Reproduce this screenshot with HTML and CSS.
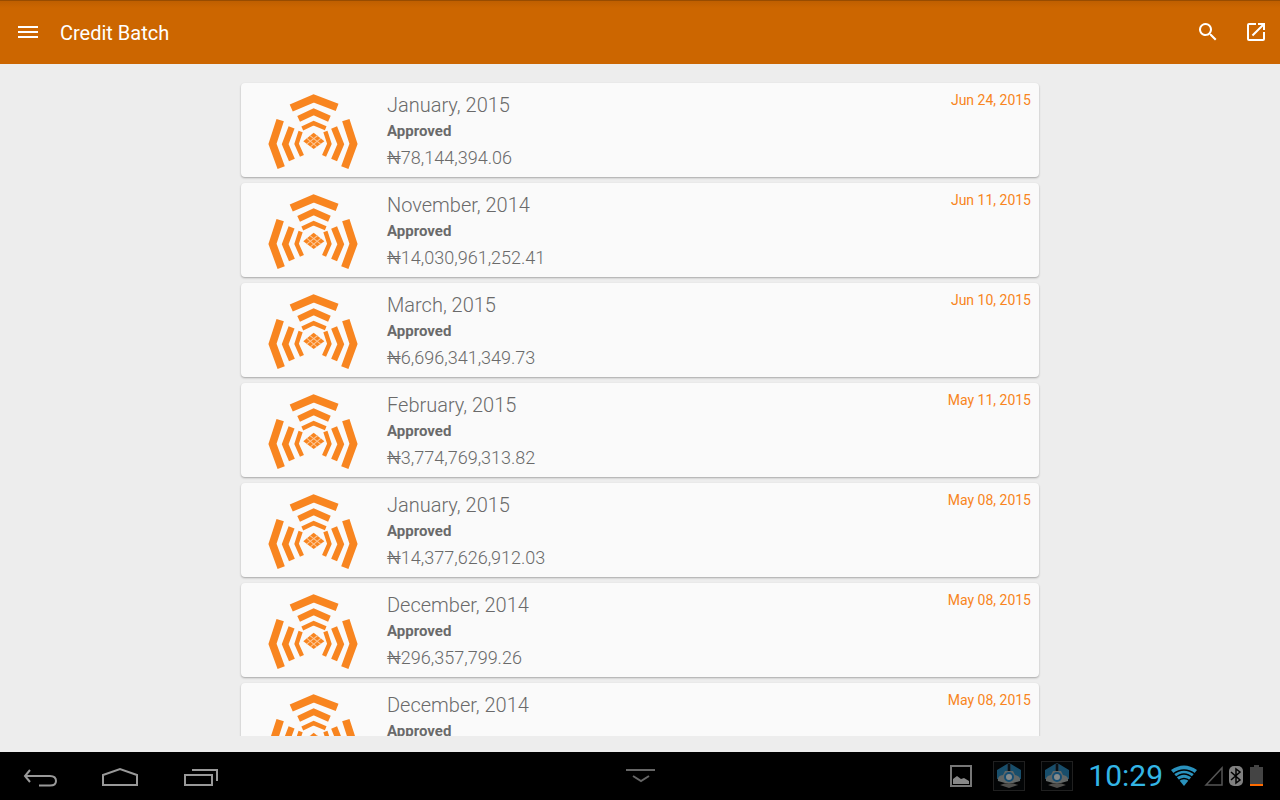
FILE: index.html
```html
<!DOCTYPE html>
<html lang="en">
<head>
    <meta charset="UTF-8">
    <meta name="viewport" content="width=device-width, initial-scale=1.0">
    <title>Credit Batch</title>
    <link rel="stylesheet" href="styles.css">
</head>
<body>
    <svg class="sprite" aria-hidden="true">
        <symbol id="logo" viewBox="24 26 268 224">
            <g fill="none" stroke="#f88520">
                <g stroke-width="23">
                    <path d="M93 68L160 39L230 66"/>
                    <path d="M60 104L37 175L63 246"/>
                    <path d="M256 104L279 175L253 246"/>
                </g>
                <g stroke-width="19">
                    <path d="M115 100L160 79L207 100"/>
                    <path d="M94 126L75 176L95 223"/>
                    <path d="M221 126L241 176L221 223"/>
                </g>
                <g stroke-width="13">
                    <path d="M126 129L160 113L196 128"/>
                    <path d="M121 138L109 175L125 211"/>
                    <path d="M195 138L207 175L191 211"/>
                </g>
            </g>
            <path fill="#f88520" d="M160 142L192 167L160 190L129 167Z"/>
            <path fill="none" stroke="#fcc899" stroke-width="3" d="M149 150L181 176M139 158L170 184M172 150L139 176M182 158L150 184"/>
        </symbol>
        <symbol id="robot" viewBox="0 0 32 30">
            <rect x="0.5" y="0.5" width="31" height="29" fill="#030506" stroke="#202020"/>
            <path fill="#184e6b" d="M4 9L14 3V12L8 18H4ZM28 9L18 3V12L24 18H28Z"/>
            <path fill="#20394a" d="M14 3L16 2L18 3V10H14Z"/>
            <path fill="#626766" d="M5 20Q4 15 10 14L12 10H20L22 14Q28 15 27 20L20 22H12Z"/>
            <circle cx="16" cy="16" r="4" fill="#858b8c" stroke="#154e73" stroke-width="2"/>
            <path fill="#50504d" d="M7 24Q16 20 25 24L16 27Z"/>
            <path stroke="#050505" stroke-width="1.5" d="M16 3V10"/>
        </symbol>
    </svg>

    <header class="app-bar">
        <button class="icon-button" aria-label="Menu">
            <svg width="24" height="24" viewBox="0 0 24 24"><path fill="#fff" d="M2 6h20v2H2zM2 11h20v2H2zM2 16h20v2H2z"/></svg>
        </button>
        <h1>Credit Batch</h1>
        <button class="icon-button" aria-label="Search">
            <svg width="24" height="24" viewBox="0 0 24 24"><path fill="#fff" d="M15.5 14h-.79l-.28-.27A6.5 6.5 0 1 0 13.73 14.43l.27.28v.79l5 4.99L20.49 19zM9.5 14a4.5 4.5 0 1 1 0-9 4.5 4.5 0 0 1 0 9z"/></svg>
        </button>
        <button class="icon-button" aria-label="Open in new window">
            <svg width="24" height="24" viewBox="0 0 24 24"><path fill="#fff" d="M19 19H5V5h7V3H5a2 2 0 0 0-2 2v14a2 2 0 0 0 2 2h14a2 2 0 0 0 2-2v-7h-2zM14 3v2h3.59l-9.83 9.83 1.41 1.41L19 6.41V10h2V3z"/></svg>
        </button>
    </header>

    <main class="content">
        <ul class="batch-list">
            <li class="card">
                <svg class="logo"><use href="#logo"/></svg>
                <div class="details">
                    <h2>January, 2015</h2>
                    <p class="status">Approved</p>
                    <p class="amount">₦78,144,394.06</p>
                </div>
                <time class="date">Jun 24, 2015</time>
            </li>
            <li class="card">
                <svg class="logo"><use href="#logo"/></svg>
                <div class="details">
                    <h2>November, 2014</h2>
                    <p class="status">Approved</p>
                    <p class="amount">₦14,030,961,252.41</p>
                </div>
                <time class="date">Jun 11, 2015</time>
            </li>
            <li class="card">
                <svg class="logo"><use href="#logo"/></svg>
                <div class="details">
                    <h2>March, 2015</h2>
                    <p class="status">Approved</p>
                    <p class="amount">₦6,696,341,349.73</p>
                </div>
                <time class="date">Jun 10, 2015</time>
            </li>
            <li class="card">
                <svg class="logo"><use href="#logo"/></svg>
                <div class="details">
                    <h2>February, 2015</h2>
                    <p class="status">Approved</p>
                    <p class="amount">₦3,774,769,313.82</p>
                </div>
                <time class="date">May 11, 2015</time>
            </li>
            <li class="card">
                <svg class="logo"><use href="#logo"/></svg>
                <div class="details">
                    <h2>January, 2015</h2>
                    <p class="status">Approved</p>
                    <p class="amount">₦14,377,626,912.03</p>
                </div>
                <time class="date">May 08, 2015</time>
            </li>
            <li class="card">
                <svg class="logo"><use href="#logo"/></svg>
                <div class="details">
                    <h2>December, 2014</h2>
                    <p class="status">Approved</p>
                    <p class="amount">₦296,357,799.26</p>
                </div>
                <time class="date">May 08, 2015</time>
            </li>
            <li class="card">
                <svg class="logo"><use href="#logo"/></svg>
                <div class="details">
                    <h2>December, 2014</h2>
                    <p class="status">Approved</p>
                </div>
                <time class="date">May 08, 2015</time>
            </li>
        </ul>
    </main>

    <footer class="system-bar">
        <div class="nav-keys">
            <button class="nav-button" aria-label="Back">
                <svg width="40" height="32" viewBox="0 0 40 32"><path fill="none" stroke="#999" stroke-width="2" d="M10 11L5 17L10 23M5 17H30Q36 17 36 22Q36 26.5 30 26.5H19" transform="translate(0 -1)"/></svg>
            </button>
            <button class="nav-button" aria-label="Home">
                <svg width="40" height="32" viewBox="0 0 40 32"><path fill="none" stroke="#999" stroke-width="2" d="M3 25V15L20 9L37 15V25Z"/></svg>
            </button>
            <button class="nav-button" aria-label="Recent apps">
                <svg width="40" height="32" viewBox="0 0 40 32"><path fill="none" stroke="#999" stroke-width="2" d="M5 15H32V25H5ZM12 10H37V21"/></svg>
            </button>
        </div>
        <button class="nav-button" aria-label="Hide bar">
            <svg width="40" height="32" viewBox="0 0 40 32"><path fill="none" stroke="#666" stroke-width="2" d="M6 10H35M13 16L21 21L29 16"/></svg>
        </button>
        <div class="status-icons">
            <svg width="22" height="22" viewBox="0 0 22 22"><rect x="1" y="1" width="20" height="20" fill="none" stroke="#777" stroke-width="2"/><path fill="#888" d="M3 19V14L7 11L11 14L14 13L19 16V19Z"/></svg>
            <div class="notifications">
                <svg width="32" height="30"><use href="#robot"/></svg>
                <svg width="32" height="30"><use href="#robot"/></svg>
            </div>
            <time class="clock">10:29</time>
            <svg width="92" height="22" viewBox="0 0 92 22">
                <path fill="#2a92bd" d="M0 5Q13 -4 26 5L13 21Z"/>
                <path fill="none" stroke="#000" stroke-width="1.5" d="M2 9Q13 1 24 9M4 13Q13 5 22 13M7 16Q13 11 19 16"/>
                <path fill="none" stroke="#555" stroke-width="1.5" d="M35 20L51 3V20Z"/>
                <rect x="58" y="1" width="14" height="20" rx="5" fill="#808080"/>
                <path fill="none" stroke="#000" stroke-width="1.5" d="M60 7L69 15L65 18V4L69 7L60 15"/>
                <path fill="#444" d="M79 2H83V0H88V2H92V20H79Z"/>
                <path fill="#ff6b00" d="M79 19H92V21H79Z"/>
            </svg>
        </div>
    </footer>
</body>
</html>
```
FILE: styles.css
```css
* {
    box-sizing: border-box;
}
body {
    display: flex;
    flex-direction: column;
    height: 100vh;
    margin: 0;
    background-color: #ededed;
    color: #6a6a6a;
    font-family: Roboto, "Noto Sans", sans-serif;
}
h1, h2, p, ul {
    margin: 0;
    padding: 0;
}
button {
    display: flex;
    align-items: center;
    justify-content: center;
    padding: 0;
    border: none;
    background: none;
    cursor: pointer;
}
svg {
    display: block;
}
.sprite {
    position: absolute;
    width: 0;
    height: 0;
}
.app-bar {
    display: flex;
    align-items: center;
    flex: none;
    height: 64px;
    padding-left: 4px;
    background: linear-gradient(#bd5e00, #cc6600 8px);
    box-shadow: inset 0 1px #984c00;
}
.app-bar h1 {
    flex: 1;
    padding: 2px 0 0 8px;
    color: #fff;
    font-size: 20px;
    font-weight: 400;
}
.icon-button {
    width: 48px;
    height: 48px;
}
.content {
    flex: 1;
    min-height: 0;
    margin-bottom: 16px;
    padding-top: 19px;
    overflow: hidden;
}
.batch-list {
    display: flex;
    flex-direction: column;
    gap: 6px;
    max-width: 798px;
    margin: 0 auto;
    list-style: none;
}
.card {
    display: flex;
    align-items: flex-start;
    min-height: 94px;
    padding: 8px 8px 4px 27px;
    border-radius: 4px;
    background-color: #fafafa;
    box-shadow: 0 1px 2px rgba(0, 0, 0, 0.3);
}
.logo {
    flex: none;
    width: 90px;
    height: 75px;
    margin-top: 3px;
}
.details {
    flex: 1;
    padding-left: 29px;
}
.details h2 {
    font-size: 20px;
    font-weight: 300;
    line-height: 28px;
}
.status {
    font-size: 15px;
    font-weight: 700;
    line-height: 24px;
}
.amount {
    font-size: 18px;
    font-weight: 300;
    line-height: 30px;
}
.date {
    color: #f88520;
    font-size: 14px;
    line-height: 18px;
}
.system-bar {
    display: grid;
    grid-template-columns: 1fr auto 1fr;
    align-items: center;
    flex: none;
    height: 48px;
    background-color: #000;
}
.nav-keys {
    display: flex;
}
.nav-button {
    width: 80px;
    height: 48px;
}
.status-icons {
    display: flex;
    align-items: center;
    justify-content: flex-end;
    padding-right: 17px;
}
.notifications {
    display: flex;
    gap: 16px;
    padding: 0 15px 0 21px;
}
.clock {
    padding-right: 8px;
    color: #33b5e5;
    font-size: 30px;
    font-weight: 400;
    line-height: 48px;
}
```
